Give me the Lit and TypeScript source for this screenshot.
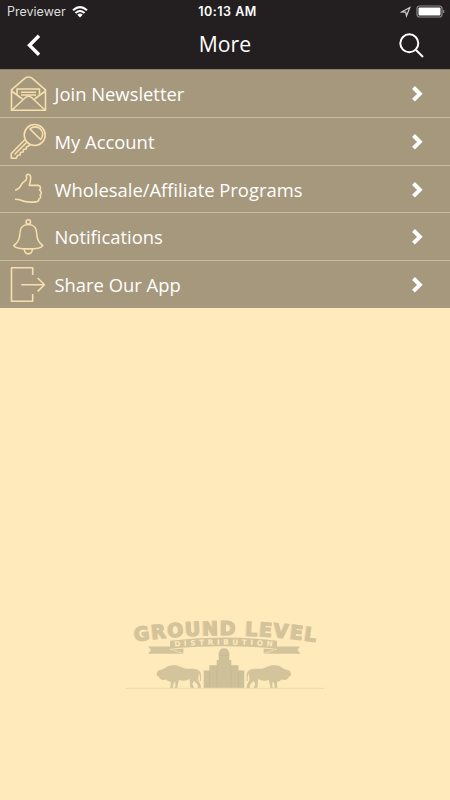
import { LitElement, html, css, svg } from 'lit';
import { customElement, property } from 'lit/decorators.js';

const ICONS: Record<string, unknown> = {
    newsletter: svg`
        <path d="M7.500 21.800 V42.200 H41.500 V21.800 L28 10.200 Q24.500 7.800 21 10.200 Z" />
        <path d="M7.500 23 L18.500 31 M41.500 23 L30.500 31 M8 42 L21.500 29.500 Q24.500 27 27.500 29.500 L41 42" />
        <path d="M13 26.500 V21 H35.500 V26.500 M17 24.300 H32 M17 27 H32" />`,
    account: svg`
        <circle cx="30.700" cy="19" r="10.500" />
        <path d="M26 13 L36.500 23.500 A7 7 0 0 0 26 13 Z" />
        <path d="M21 23.500 L7.300 37.500 V42.300 H12.300 L13.500 39.500 L16 39 L16.500 36.500 L19 36 L19.500 33.500 L22 33 L22.500 31 L26 29 M10.500 38.500 L22.500 26.500" />`,
    wholesale: svg`
        <path d="M11 26 C15.500 26 16.500 21.500 18.500 19 C20 17.300 22.300 17 22.600 14.500 C22.700 13 21.300 10.200 24.300 10.200 C28 10.500 26.700 16 25.300 21.400 L34 21.300 C37 21.700 37 25 35.500 26 C38 27.300 37.500 30.300 36 31 C37.300 32.500 36.500 34.500 35 35 C35 37 34 37.700 32 37.900 C26 38.500 21 38.300 17 36.300 C15 35.300 13 35.300 11 35.300" />`,
    notifications: svg`
        <path d="M9.800 34.500 C14 31.500 15.500 29 15.700 24 C16 17 18 13.500 24.300 13.500 C30.600 13.500 32.600 17 32.900 24 C33.100 29 34.600 31.500 38.800 34.500 C37 39 11.600 39 9.800 34.500 Z" />
        <circle cx="24.300" cy="11" r="2.200" />
        <path d="M20.300 38 C20 44.500 28.600 44.500 28.300 38" />`,
    share: svg`<path d="M28.700 16 V8.800 H7.500 V42.300 H28.700 V35 M17.300 25.700 H40.500 M33.700 19 L40.500 25.700 L33.700 32.400" />`,
};

const MENU = [
    { icon: 'newsletter', label: 'Join Newsletter' },
    { icon: 'account', label: 'My Account' },
    { icon: 'wholesale', label: 'Wholesale/Affiliate Programs' },
    { icon: 'notifications', label: 'Notifications' },
    { icon: 'share', label: 'Share Our App' },
];

@customElement('status-bar')
export class StatusBar extends LitElement {
    render() {
        return html`
            <div class="carrier">
                Previewer
                <svg width="16" height="12" viewBox="0 0 16 12">
                    <path d="M1 4.300 Q8 -2 15 4.300 M3.500 7 Q8 3 12.500 7" />
                    <path class="solid" d="M5.300 8.700 Q8 6.300 10.700 8.700 L8 11.500 Z" />
                </svg>
            </div>
            <div class="time">10:13 AM</div>
            <div class="power">
                <svg width="12" height="12" viewBox="0 0 12 12">
                    <path class="arrow" d="M1.500 6 L9.800 1.500 L6.500 10 L5.700 6.200 Z" />
                </svg>
                <svg width="29" height="13" viewBox="0 0 29 13">
                    <rect class="case" x="1" y="1" width="25" height="11" rx="2.500" />
                    <rect class="solid" x="2.500" y="2.500" width="22" height="8" rx="1" />
                    <path class="case" d="M27.700 5 V8" />
                </svg>
            </div>
        `;
    }

    static styles = css`
        :host {
            display: grid;
            grid-template-columns: 1fr auto 1fr;
            height: 22px;
            padding: 0 5px 0 7px;
            align-items: center;
            color: #dedddd;
            font: 12.5px/22px Inter, sans-serif;
        }

        .carrier,
        .power {
            display: flex;
            align-items: center;
        }

        .carrier {
            gap: 6px;
        }

        .time {
            padding: 1px 0 0 3px;
            color: #fff;
            font-size: 12.5px;
            font-weight: 600;
            letter-spacing: 0.5px;
        }

        .power {
            justify-content: flex-end;
            gap: 4px;
        }

        svg {
            fill: none;
            stroke: #fff;
            stroke-width: 2;
        }

        .solid {
            fill: #fff;
            stroke: none;
        }

        .case {
            stroke: #8c8a8b;
            stroke-width: 1.2;
        }

        .arrow {
            stroke: #cfcece;
            stroke-width: 1.2;
        }
    `;
}

@customElement('nav-bar')
export class NavBar extends LitElement {
    @property() heading = '';

    render() {
        return html`
            <svg width="20" height="24" viewBox="24 33 20 24">
                <path class="back" d="M39 35.800 L29.500 45.300 L39 54.800" />
            </svg>
            <h1>${this.heading}</h1>
            <svg class="search" width="28" height="28" viewBox="398 31 28 28">
                <circle cx="409.300" cy="43.300" r="9" />
                <path d="M416 50 L423 57" />
            </svg>
        `;
    }

    static styles = css`
        :host {
            display: grid;
            grid-template-columns: 1fr auto 1fr;
            align-items: center;
            box-sizing: border-box;
            height: 47.3px;
            padding: 0 24px 1px;
        }

        h1 {
            margin: 0;
            padding-bottom: 2px;
            color: #fff;
            font: 400 21.2px/44px 'Open Sans', sans-serif;
        }

        svg {
            fill: none;
            stroke: #fff;
            stroke-width: 2;
        }

        .back {
            stroke-width: 3.4;
        }

        .search {
            justify-self: end;
        }
    `;
}

@customElement('menu-row')
export class MenuRow extends LitElement {
    @property() icon = '';
    @property() label = '';

    render() {
        return html`
            <svg class="icon" width="50" height="47" viewBox="0 2 50 47">${ICONS[this.icon]}</svg>
            <span class="label">${this.label}</span>
            <svg class="chevron" width="14" height="18" viewBox="0 0 14 18">
                <path d="M2.500 2.500 L8.800 8.800 L2.500 15.100" />
            </svg>
        `;
    }

    static styles = css`
        :host {
            display: flex;
            align-items: center;
            box-sizing: border-box;
            height: 47.7px;
            padding: 0 25px 0 4px;
            border-top: 1px solid #cabc99;
            background: #a6987d;
        }

        :host(:first-of-type) {
            border-top-color: #8d816c;
        }

        .icon {
            fill: none;
            stroke: #f7dfae;
            stroke-width: 1.6;
            stroke-linejoin: round;
        }

        .label {
            flex: 1;
            padding: 1px 0 0 0.5px;
            color: #fff;
            font: 18.4px/46px 'Open Sans', sans-serif;
        }

        .chevron {
            margin-top: 1px;
            fill: none;
            stroke: #fff;
            stroke-width: 4;
        }
    `;
}

@customElement('brand-logo')
export class BrandLogo extends LitElement {
    // drawn at three times its size, facing left
    _bison() {
        return svg`
            <path transform="translate(120 610) scale(0.3333)" d="M110 192 C111 184 116 179 123 179 C128 177 131 178 134 175 C142 167 154 164 167 166 C180 168 187 175 198 176 C208 177 215 175 225 177 C235 178 241 183 243 191 C244 200 243 207 243 213 L239 213 C241 204 240 196 236 190 C237 200 233 206 236 213 C240 219 243 224 243 235 H232 L234 231 C234 224 229 219 222 213 L217 222 L223 235 H213 L210 229 C210 220 210 214 208 207 C199 213 187 213 177 210 L174 221 L172 235 H162 L166 230 L166 214 L160 222 L159 235 H149 L152 230 L152 215 C146 215 142 213 138 208 C136 211 130 211 126 209 C120 208 117 203 117 200 C112 200 110 196 110 192 Z" />`;
    }

    render() {
        return html`
            <svg width="210" height="80" viewBox="120 615 210 80">
                <path id="name-arc" class="guide" d="M135 641.500 Q225 628.500 317 642" />
                <path id="band-arc" class="guide" d="M174.500 646.500 Q224 642.700 274 646.500" />

                <text class="name"><textPath href="#name-arc" textLength="181.500" lengthAdjust="spacing">GROUND LEVEL</textPath></text>

                <path d="M148 646.500 H170 L183.700 653.800 H148 L151 650 Z" />
                <path d="M299.800 646.500 H277 L263.500 653.800 H300.500 L297.500 650 Z" />
                <path class="fold" d="M170 649 L183.700 648.300 V653.800 Z M277 649 L263.300 648.300 V653.800 Z" />
                <path d="M170 640.700 Q224 634.500 277 640.700 V648.500 Q224 643.800 170 648.500 Z" />
                <text class="tagline"><textPath href="#band-arc" textLength="98" lengthAdjust="spacing">DISTRIBUTION</textPath></text>

                ${this._bison()}
                <g transform="translate(447.700 0) scale(-1 1)">${this._bison()}</g>

                <path class="tower" d="M203.700 688 V670.500 H209.300 V665.300 H216.700 V660 H218.700 V653 C219.300 650 221 648.300 224 648.300 C227 648.300 228.700 650 229.300 653 V660 H231.300 V665.300 H238.500 V670.500 H244.300 V688 Z" />
                <path class="seams" d="M209.500 671 V687 M217 666 V687 M231 666 V687 M238.500 671 V687 M219 655.500 H229" />
                <path class="ground" d="M126 688.300 H324" />
            </svg>
        `;
    }

    static styles = css`
        :host {
            display: block;
        }

        svg {
            display: block;
            fill: #d3c49c;
        }

        .guide {
            fill: none;
        }

        .name {
            font: 700 19px 'DejaVu Sans', sans-serif;
            stroke: #d3c49c;
            stroke-width: 1.2;
            filter: drop-shadow(-0.6px 0.9px 0 #f6d3a3);
        }

        .tagline {
            fill: #ffeabc;
            font: 700 7.2px 'DejaVu Sans', sans-serif;
        }

        .fold {
            stroke: #ffeabc;
            stroke-width: 0.6;
        }

        .tower {
            fill: #cec099;
        }

        .seams {
            fill: none;
            stroke: #c3b691;
            stroke-width: 0.6;
        }

        .ground {
            fill: none;
            stroke: #ecd9ae;
        }
    `;
}

@customElement('app-root')
export class AppRoot extends LitElement {
    render() {
        return html`
            <header>
                <status-bar></status-bar>
                <nav-bar heading="More"></nav-bar>
            </header>
            <nav>
                ${MENU.map((item) => html`<menu-row icon=${item.icon} label=${item.label}></menu-row>`)}
            </nav>
            <footer><brand-logo></brand-logo></footer>
        `;
    }

    static styles = css`
        :host {
            display: flex;
            flex-direction: column;
            height: 800px;
            background: #ffeabc;
        }

        header {
            background: #231f20;
        }

        footer {
            display: flex;
            justify-content: center;
            margin-top: auto;
            padding-bottom: 105px;
        }
    `;
}
